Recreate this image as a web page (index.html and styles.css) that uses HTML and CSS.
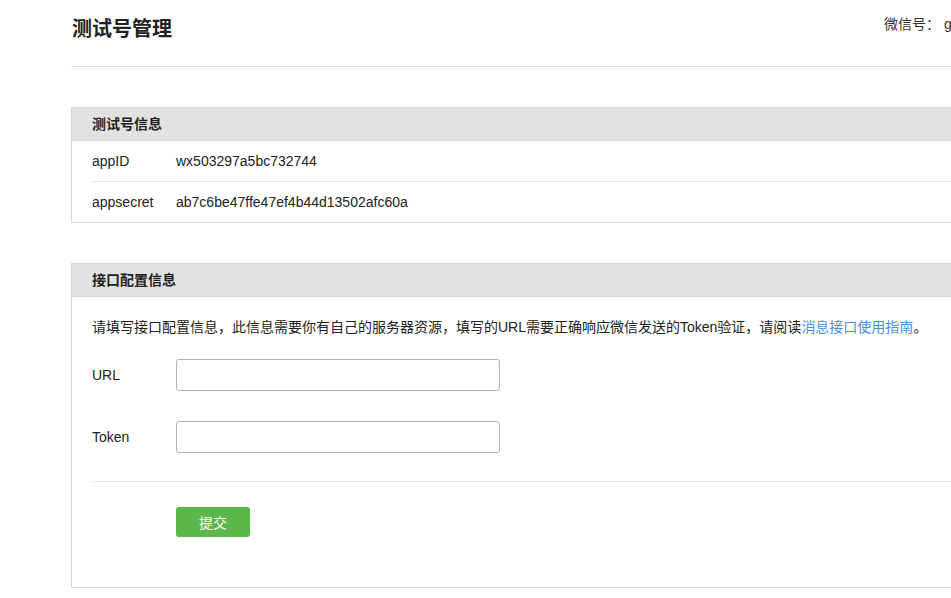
FILE: index.html
```html
<!DOCTYPE html>
<html lang="zh-CN">
<head>
<meta charset="utf-8">
<title>测试号管理</title>
<link rel="stylesheet" href="styles.css">
</head>
<body>
<div class="page">
  <header class="top">
    <h1 class="title">测试号管理</h1>
    <div class="account">微信号： gh_3b9a1c2e0f57</div>
  </header>

  <section class="panel">
    <div class="panel-head">测试号信息</div>
    <div class="panel-list">
      <div class="info-row"><span class="label">appID</span><span class="value">wx503297a5bc732744</span></div>
      <div class="info-row"><span class="label">appsecret</span><span class="value">ab7c6be47ffe47ef4b44d13502afc60a</span></div>
    </div>
  </section>

  <section class="panel">
    <div class="panel-head">接口配置信息</div>
    <div class="panel-body">
      <p class="desc">请填写接口配置信息，此信息需要你有自己的服务器资源，填写的URL需要正确响应微信发送的Token验证，请阅读<a class="link" href="#">消息接口使用指南</a>。</p>
      <div class="form-row"><label class="label">URL</label><input class="field" type="text"></div>
      <div class="form-row"><label class="label">Token</label><input class="field" type="text"></div>
      <div class="actions"><button class="btn" type="button">提交</button></div>
    </div>
  </section>
</div>
</body>
</html>
```

FILE: styles.css
```css
html, body {
  margin: 0;
  padding: 0;
  background: #fff;
  overflow: hidden;
}
body {
  font-family: "Liberation Sans", "Noto Sans CJK SC", sans-serif;
  font-size: 14px;
  color: #222;
}
.page {
  margin-left: 71px;
  width: 1100px;
}
.top {
  display: grid;
  grid-template-columns: 813px auto;
  height: 67px;
  border-bottom: 1px solid #dcdcdc;
  box-sizing: border-box;
}
.title {
  margin: 0;
  padding: 16px 0 0 1px;
  font-size: 20px;
  line-height: 26px;
  font-weight: bold;
  color: #222;
}
.account {
  padding-top: 14px;
  line-height: 20px;
  font-size: 14px;
  color: #333;
}
.panel {
  margin-top: 40px;
  border: 1px solid #d6d6d6;
}
.panel-head {
  height: 32px;
  line-height: 32px;
  background: #e2e2e2;
  border-bottom: 1px solid #d6d6d6;
  padding-left: 20px;
  font-weight: bold;
  color: #222;
}
.panel-list {
  padding-left: 20px;
}
.info-row {
  display: flex;
  height: 40px;
  align-items: center;
}
.info-row + .info-row {
  border-top: 1px solid #e4e4e4;
}
.label {
  width: 84px;
  flex: none;
  color: #222;
}
.value {
  color: #222;
}
.panel-body {
  padding: 20px 0 50px 20px;
}
.desc {
  margin: 0;
  line-height: 20px;
  color: #222;
}
.link {
  color: #4a90e2;
  text-decoration: none;
}
.form-row {
  display: flex;
  align-items: center;
  margin-top: 22px;
}
.form-row + .form-row {
  margin-top: 30px;
}
.field {
  width: 324px;
  height: 32px;
  box-sizing: border-box;
  border: 1px solid #b3b3b3;
  border-radius: 3px;
  margin: 0;
  padding: 0 8px;
  font: inherit;
}
.actions {
  margin-top: 28px;
  border-top: 1px solid #e4e4e4;
  padding: 25px 0 0 84px;
}
.btn {
  display: block;
  width: 74px;
  height: 30px;
  border: 0;
  border-radius: 3px;
  background: #5cb74b;
  color: #fff;
  font: inherit;
  font-size: 14px;
  padding: 0;
  cursor: pointer;
}
```
